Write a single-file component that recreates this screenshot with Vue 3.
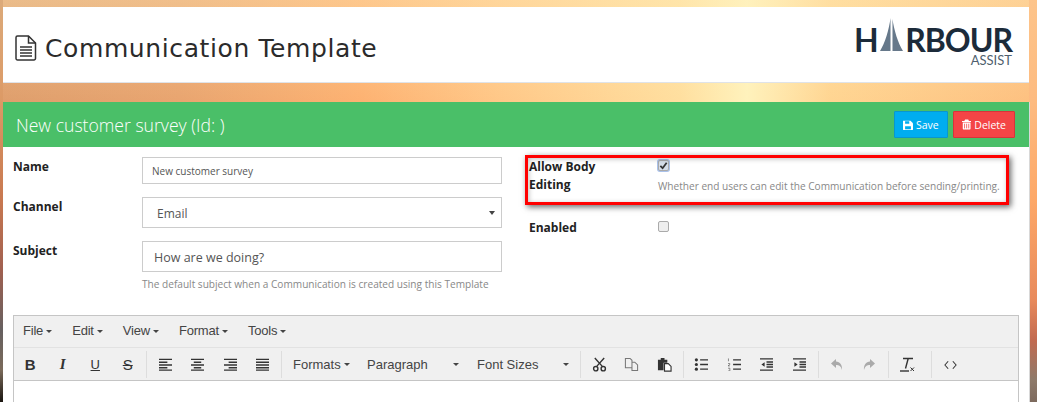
<script setup>
const menus = ['File', 'Edit', 'View', 'Format', 'Tools']
</script>

<template>
  <div class="page">
    <header class="top">
      <h1 class="title">
        <svg class="doc-icon" viewBox="0 0 22 26" width="22" height="26">
          <path d="M2.500 1h11l7 7v15.500a1.500 1.500 0 0 1-1.500 1.500H2.500A1.500 1.500 0 0 1 1 23.500V2.500A1.500 1.500 0 0 1 2.500 1z" fill="none" stroke="#333" stroke-width="1.500" />
          <path d="M13.500 1v7h7" fill="none" stroke="#333" stroke-width="1.500" />
          <path d="M5 12h12M5 15h12M5 18h12M5 21h12" stroke="#333" stroke-width="1.300" />
        </svg>
        Communication Template
      </h1>
      <div class="logo">
        <div class="logo-word">
          <span>H</span>
          <svg class="sail" viewBox="0 0 23 33" width="23" height="33">
            <path d="M0 33C5 25 9 12 10.500 0V33z" fill="#66788a" />
            <path d="M12.500 1C14 12 18 25 23 33H12.500z" fill="#66788a" />
          </svg>
          <span>RBOUR</span>
        </div>
        <div class="logo-sub">ASSIST</div>
      </div>
    </header>

    <main class="panel">
      <div class="panel-head">
        <h2>New customer survey (Id: )</h2>
        <div class="actions">
          <button class="btn btn-save">
            <svg viewBox="0 0 12 12" width="10" height="10">
              <path d="M0 1h9l3 3v7a1 1 0 0 1-1 1H1a1 1 0 0 1-1-1z" fill="#fff" />
              <path d="M2.500 1.500h5v3h-5zM2.500 7.500h7v3.500h-7z" fill="#00adef" />
            </svg>
            Save
          </button>
          <button class="btn btn-delete">
            <svg viewBox="0 0 12 13" width="10" height="11">
              <path d="M4 0h4l1 2h3v1.200H0V2h3zM1 4h10v8a1 1 0 0 1-1 1H2a1 1 0 0 1-1-1z" fill="#fff" />
              <path d="M3.300 5.500v6M6 5.500v6M8.700 5.500v6" stroke="#f44546" stroke-width="1" />
            </svg>
            Delete
          </button>
        </div>
      </div>

      <div class="form">
        <div class="col-left">
          <div class="row row-name">
            <label>Name</label>
            <div class="control small">New customer survey</div>
          </div>
          <div class="row row-channel">
            <label>Channel</label>
            <div class="control select">Email<span class="select-arrow"></span></div>
          </div>
          <div class="row row-subject">
            <label>Subject</label>
            <div>
              <div class="control subject">How are we doing?</div>
              <p class="help">The default subject when a Communication is created using this Template</p>
            </div>
          </div>
        </div>

        <div class="col-right">
          <div class="check-row allow">
            <label>Allow Body Editing</label>
            <div>
              <span class="checkbox checked">
                <svg viewBox="0 0 10 10" width="9" height="9"><path d="M1.500 5.500l2.500 2.500 4.500-6" fill="none" stroke="#333" stroke-width="2" /></svg>
              </span>
              <p class="help help-check">Whether end users can edit the Communication before sending/printing.</p>
            </div>
            <div class="highlight"></div>
          </div>
          <div class="check-row enabled">
            <label>Enabled</label>
            <div><span class="checkbox"></span></div>
          </div>
        </div>
      </div>

      <section class="editor">
        <div class="menubar">
          <span v-for="m in menus" :key="m" class="menu-item">{{ m }}<i class="caret"></i></span>
        </div>
        <div class="toolbar">
          <div class="group group-first">
            <span class="tool bold">B</span>
            <span class="tool italic">I</span>
            <span class="tool under">U</span>
            <span class="tool strike">S</span>
          </div>
          <div class="group">
            <span class="tool"><svg viewBox="0 0 16 14" width="15" height="13"><path d="M1 1.500h14M1 4.500h9M1 7.500h14M1 10.500h9M1 13h14" stroke="#333" stroke-width="1.500" /></svg></span>
            <span class="tool"><svg viewBox="0 0 16 14" width="15" height="13"><path d="M1 1.500h14M4 4.500h8M1 7.500h14M4 10.500h8M1 13h14" stroke="#333" stroke-width="1.500" /></svg></span>
            <span class="tool"><svg viewBox="0 0 16 14" width="15" height="13"><path d="M1 1.500h14M6 4.500h9M1 7.500h14M6 10.500h9M1 13h14" stroke="#333" stroke-width="1.500" /></svg></span>
            <span class="tool"><svg viewBox="0 0 16 14" width="15" height="13"><path d="M1 1.500h14M1 4.500h14M1 7.500h14M1 10.500h14M1 13h14" stroke="#333" stroke-width="1.500" /></svg></span>
          </div>
          <div class="group">
            <span class="drop d-formats">Formats<i class="caret"></i></span>
            <span class="drop d-para">Paragraph<i class="caret"></i></span>
            <span class="drop d-size">Font Sizes<i class="caret"></i></span>
          </div>
          <div class="group">
            <span class="tool"><svg viewBox="0 0 16 16" width="15" height="15"><path d="M3 1l8 9M13 1L5 10" stroke="#333" stroke-width="1.500" fill="none" /><circle cx="4" cy="12.500" r="2.300" fill="none" stroke="#333" stroke-width="1.500" /><circle cx="12" cy="12.500" r="2.300" fill="none" stroke="#333" stroke-width="1.500" /></svg></span>
            <span class="tool"><svg viewBox="0 0 16 16" width="15" height="15"><path d="M1.500 1.500h5l2 2v8h-7zM8.500 5.500h3l3 3v6h-6v-3" fill="none" stroke="#777" stroke-width="1.100" /></svg></span>
            <span class="tool"><svg viewBox="0 0 16 16" width="15" height="15"><path d="M1 3h3V1h4v2h3v3H7v8H1z" fill="#333" /><path d="M8 7h4l3 3v5H8z" fill="#fff" stroke="#333" stroke-width="1.200" /></svg></span>
          </div>
          <div class="group">
            <span class="tool"><svg viewBox="0 0 16 14" width="15" height="13"><circle cx="2.500" cy="2" r="1.700" fill="#333" /><circle cx="2.500" cy="7" r="1.700" fill="#333" /><circle cx="2.500" cy="12" r="1.700" fill="#333" /><path d="M6.500 2H15M6.500 7H15M6.500 12H15" stroke="#333" stroke-width="1.400" /></svg></span>
            <span class="tool"><svg viewBox="0 0 16 14" width="15" height="13"><path d="M1.500 0.500v3M1 6h2v1L1 8.500h2M1 11h2v3H1" fill="none" stroke="#555" stroke-width="0.700" /><path d="M6.500 2H15M6.500 7H15M6.500 12H15" stroke="#333" stroke-width="1.400" /></svg></span>
            <span class="tool"><svg viewBox="0 0 16 14" width="15" height="13"><path d="M1 1h14M8 4.300h7M8 7h7M8 9.700h7M1 13h14" stroke="#333" stroke-width="1.400" /><path d="M6 4.500v5L2.500 7z" fill="#333" /></svg></span>
            <span class="tool"><svg viewBox="0 0 16 14" width="15" height="13"><path d="M1 1h14M8 4.300h7M8 7h7M8 9.700h7M1 13h14" stroke="#333" stroke-width="1.400" /><path d="M2.500 4.500v5L6 7z" fill="#333" /></svg></span>
          </div>
          <div class="group">
            <span class="tool"><svg viewBox="0 0 14 14" width="14" height="14"><path d="M6 1L1 5.500 6 10V7c3 0 5 1 6 5 .5-5-2-8-6-8.500z" fill="#aaa" /></svg></span>
            <span class="tool"><svg viewBox="0 0 14 14" width="14" height="14"><path d="M8 1l5 4.500L8 10V7c-3 0-5 1-6 5-.5-5 2-8 6-8.500z" fill="#aaa" /></svg></span>
          </div>
          <div class="group group-clear">
            <span class="tool"><svg viewBox="0 0 16 15" width="16" height="15"><path d="M4 1.500h10M9.200 1.500L6.500 11.500" stroke="#333" stroke-width="1.400" fill="none" /><path d="M1 14h9" stroke="#333" stroke-width="1.400" /><path d="M11.500 10.500l3.500 3.500M15 10.500L11.500 14" stroke="#333" stroke-width="1" /></svg></span>
          </div>
          <div class="group no-sep">
            <span class="tool"><svg viewBox="0 0 14 10" width="13" height="10"><path d="M4.500 1L1 5l3.500 4M9.500 1L13 5l-3.500 4" fill="none" stroke="#333" stroke-width="1.100" /></svg></span>
          </div>
        </div>
        <div class="edit-area"></div>
      </section>
    </main>
  </div>
</template>

<style>
html, body {
  margin: 0;
  height: 100%;
  overflow: hidden;
}
</style>

<style scoped>
.page {
  width: 1037px;
  height: 402px;
  box-sizing: border-box;
  padding: 7px 8px 0 3px;
  overflow: hidden;
  font-family: "Open Sans", "Liberation Sans", sans-serif;
  color: #333;
  background:
    linear-gradient(to bottom, #dcaa7a 0, #dc9a66 100px, #c87850 200px, #a06050 270px, #666060 330px, #7a6a5a 370px, #1a1510 402px) left top / 3px 100% no-repeat,
    linear-gradient(to bottom, #fdc48a 0, #fdbb80 100px, #fda868 200px, #e88a5c 300px, #c26a50 340px, #8e7a6a 380px, #7d6a5e 402px) right top / 8px 100% no-repeat,
    linear-gradient(to bottom, rgba(255, 240, 190, 0.35), rgba(255, 240, 190, 0) 100px),
    linear-gradient(to right, #df9f6d 0, #e9a570 180px, #fdb272 360px, #ffc888 500px, #ffdf9f 680px, #fff2bc 747px, #ffd592 830px, #fdc080 1037px);
}

.top {
  height: 76px;
  background: #fff;
  border-bottom: 1px solid #dfe3e8;
  box-sizing: border-box;
  display: flex;
  justify-content: space-between;
  align-items: center;
  padding: 0 17px 0 12px;
}

.title {
  margin: 0;
  padding-top: 7px;
  display: flex;
  align-items: center;
  gap: 8px;
  font-family: "DejaVu Sans", sans-serif;
  font-weight: 400;
  font-size: 25px;
  letter-spacing: 0.6px;
  color: #2b2b2b;
}

.doc-icon {
  flex: none;
}

.logo {
  width: 158px;
  margin-bottom: 5px;
  text-align: right;
  font-family: "Lato", sans-serif;
  color: #1c2b3a;
}

.logo-word {
  display: flex;
  align-items: flex-end;
  justify-content: space-between;
  height: 33px;
  font-weight: 700;
  font-size: 32px;
  line-height: 23px;
  letter-spacing: -1px;
}

.sail {
  flex: none;
}

.logo-sub {
  font-size: 13px;
  line-height: 13px;
  color: #4f5f6e;
  margin-top: 3px;
}

.panel {
  margin-top: 19px;
  height: 320px;
  background: #fff;
  box-shadow: 1px 0 0 #d8d8d8;
}

.panel-head {
  height: 45px;
  background: #4abf68;
  display: flex;
  justify-content: space-between;
  align-items: center;
  padding: 0 14px 0 13px;
}

.panel-head h2 {
  margin: 0;
  font-weight: 300;
  font-size: 17.600px;
  color: #fff;
}

.actions {
  display: flex;
  gap: 5px;
}

.btn {
  height: 27px;
  padding: 0 8px;
  border: 1px solid;
  border-radius: 1px;
  font-family: inherit;
  font-size: 10.500px;
  color: #fff;
  display: flex;
  align-items: center;
  gap: 3px;
}

.btn-save {
  width: 54px;
  background: #00adef;
  border-color: #0a96cc;
}

.btn-delete {
  width: 62px;
  background: #f44546;
  border-color: #d8343a;
}

.form {
  display: flex;
  height: 168px;
  box-sizing: border-box;
  padding: 10px 0 0 10px;
}

.col-left {
  width: 489px;
}

.row {
  display: grid;
  grid-template-columns: 129px 360px;
}

.row label,
.check-row label {
  padding-top: 1px;
  font-weight: 700;
  font-size: 12px;
  color: #222;
  line-height: 18px;
}

.row-name {
  height: 40px;
}

.row-channel {
  height: 44px;
}

.control {
  box-sizing: border-box;
  border: 1px solid #ccc;
  color: #555;
  display: flex;
  align-items: center;
}

.small {
  height: 27px;
  padding-left: 9px;
  font-size: 10px;
}

.select {
  height: 31px;
  padding: 2px 0 0 14px;
  font-size: 12px;
  position: relative;
}

.select-arrow {
  position: absolute;
  right: 6px;
  top: 13px;
  border-left: 3px solid transparent;
  border-right: 3px solid transparent;
  border-top: 4px solid #444;
}

.subject {
  height: 31px;
  padding: 2px 0 0 11px;
  font-size: 12.500px;
}

.help {
  margin: 5px 0 0;
  font-size: 10.100px;
  line-height: 14px;
  color: #888;
}

.col-right {
  padding-left: 27px;
  flex: 1;
}

.check-row {
  display: grid;
  grid-template-columns: 129px 1fr;
  position: relative;
}

.check-row label {
  width: 90px;
}

.allow {
  height: 61px;
}

.checkbox {
  display: flex;
  width: 9px;
  height: 9px;
  margin-top: 3px;
  border: 1px solid #aaa;
  border-radius: 2px;
  background: #eee;
  align-items: center;
  justify-content: center;
}

.checked {
  background: #d5dde8;
  box-shadow: 0 0 0 1px #a9c1ea;
}

.help-check {
  margin-top: 8px;
  white-space: nowrap;
}

.highlight {
  position: absolute;
  left: -4px;
  top: -2px;
  width: 484px;
  height: 50px;
  box-sizing: border-box;
  border: 3px solid #f00;
  box-shadow: 2px 2px 6px rgba(0, 0, 0, 0.6), inset 1px 1px 5px rgba(0, 0, 0, 0.25);
  pointer-events: none;
}

.editor {
  margin-left: 10px;
  width: 1006px;
  box-sizing: border-box;
  border: 1px solid #c5c5c5;
  font-family: "Liberation Sans", Arial, sans-serif;
  font-size: 13px;
  color: #333;
}

.menubar {
  height: 32px;
  background: #f0f0f0;
  border-bottom: 1px solid #e2e2e2;
  display: flex;
  align-items: center;
  padding: 0 0 2px 9px;
  gap: 20px;
  box-sizing: border-box;
}

.menu-item {
  color: #444;
  letter-spacing: -0.2px;
}

.caret {
  display: inline-block;
  margin-left: 3px;
  vertical-align: 2px;
  border-left: 3px solid transparent;
  border-right: 3px solid transparent;
  border-top: 3px solid #444;
}

.toolbar {
  height: 33px;
  box-sizing: border-box;
  background: #f0f0f0;
  border-bottom: 1px solid #c5c5c5;
  display: flex;
  padding-top: 3px;
}

.group {
  height: 27px;
  display: flex;
  align-items: center;
  border-right: 1px solid #ddd;
  padding: 0 2px;
}

.group-first {
  padding-left: 0;
}

.group-clear {
  padding-right: 8px;
}

.no-sep {
  border-right: 0;
}

.tool {
  width: 32.500px;
  display: flex;
  justify-content: center;
  align-items: center;
  font-size: 15px;
}

.bold {
  font-weight: 700;
}

.italic {
  font-style: italic;
  font-family: "Liberation Serif", serif;
  font-weight: 700;
}

.under {
  text-decoration: underline;
  font-size: 13px;
}

.strike {
  text-decoration: line-through;
}

.drop {
  color: #444;
  display: flex;
  justify-content: space-between;
  align-items: center;
  padding: 0 9.500px 0 9px;
  box-sizing: border-box;
}

.drop .caret {
  vertical-align: 0;
}

.d-formats {
  width: 74px;
}

.d-para,
.d-size {
  width: 110px;
}

.edit-area {
  height: 60px;
  background: #fff;
}
</style>
